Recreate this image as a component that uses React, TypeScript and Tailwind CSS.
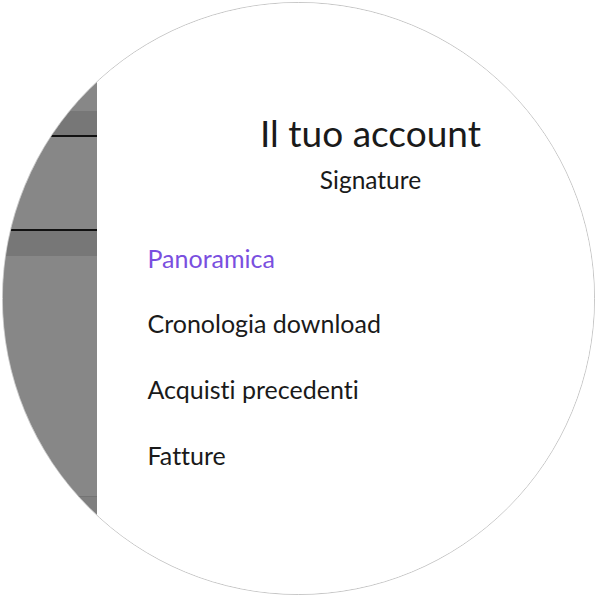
export default function App() {
  const font = { fontFamily: "Lato, 'Noto Sans', sans-serif" };
  return (
    <div className="w-[596px] h-[596px] bg-white flex items-center justify-center [font-variant-ligatures:none]" style={font}>
      <div className="w-[593px] h-[593px] rounded-full border border-[#c6c6c6] overflow-hidden flex shrink-0 bg-white">
        <div className="w-[94px] shrink-0 flex flex-col bg-[#878787]">
          <div className="h-[108px] bg-[#878787]" />
          <div className="h-[24px] bg-[#777777]" />
          <div className="h-[2px] bg-[#111111]" />
          <div className="h-[92px] bg-[#878787]" />
          <div className="h-[2px] bg-[#111111]" />
          <div className="h-[25px] bg-[#777777]" />
          <div className="h-[240px] bg-[#878787]" />
          <div className="h-[1px] bg-[#747474]" />
          <div className="flex-1 bg-[#7f7f7f]" />
        </div>
        <div className="w-[548px] shrink-0 bg-white flex flex-col">
          <div className="flex flex-col items-center pt-[108px]">
            <h1 className="text-[37px] leading-[44px] text-[#1a1a1a] font-normal">Il tuo account</h1>
            <p className="mt-[12px] text-[24.5px] leading-[26px] text-[#1a1a1a]">Signature</p>
          </div>
          <nav className="flex flex-col gap-[36.7px] pl-[51px] mt-[51px] text-[25px] leading-[29px] text-[#1a1a1a]">
            <span className="text-[#7a4fdf]">Panoramica</span>
            <span>Cronologia download</span>
            <span>Acquisti precedenti</span>
            <span>Fatture</span>
          </nav>
        </div>
      </div>
    </div>
  );
}
